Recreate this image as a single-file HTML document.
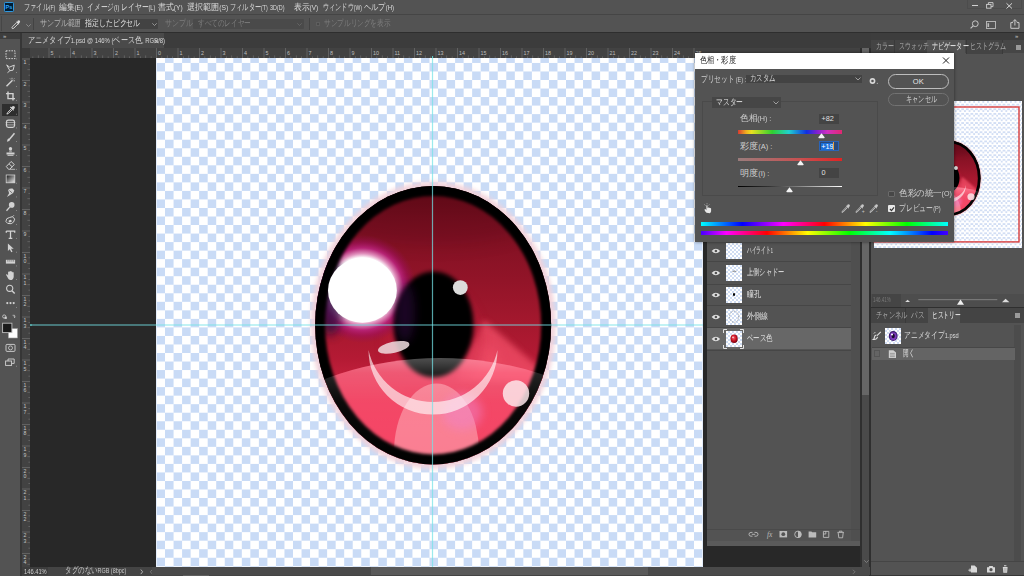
<!DOCTYPE html>
<html><head><meta charset="utf-8">
<style>
*{margin:0;padding:0;box-sizing:border-box}
html,body{width:1024px;height:576px;overflow:hidden;background:#535353;font-family:"Liberation Sans",sans-serif;color:#d4d4d4}
.a{position:absolute}
.t{position:absolute;white-space:nowrap}
svg{position:absolute;overflow:visible}
</style></head><body>
<div class="a" style="left:0px;top:0px;width:1024px;height:14px;background:#535353;"></div>
<div class="a" style="left:0px;top:14px;width:1024px;height:1px;background:#454545;"></div>
<div class="a" style="left:0px;top:15px;width:1024px;height:17px;background:#535353;"></div>
<div class="a" style="left:0px;top:32px;width:1024px;height:1px;background:#2e2e2e;"></div>
<div class="a" style="left:0px;top:33px;width:1024px;height:543px;background:#363636;"></div>
<div class="a" style="left:0px;top:33px;width:20px;height:6px;background:#3d3d3d;"></div>
<div class="a" style="left:0px;top:39px;width:20px;height:537px;background:#535353;"></div>
<div class="t" style="left:3px;top:32.5px;font-size:6px;color:#c8c8c8;letter-spacing:-1px">&#187;</div>
<div class="a" style="left:22px;top:33px;width:849px;height:15px;background:#3c3c3c;"></div>
<div class="a" style="left:22px;top:33px;width:142px;height:15px;background:#4a4a4a;"></div>
<div class="a" style="left:22px;top:48px;width:840px;height:10px;background:#424242;"></div>
<div class="a" style="left:22px;top:58px;width:8px;height:509px;background:#424242;"></div>
<div class="a" style="left:22px;top:48px;width:8px;height:10px;background:#3a3a3a;"></div>
<div class="a" style="left:30px;top:58px;width:673px;height:509px;background:#282828;"></div>
<div class="a" style="left:156px;top:58px;width:546.6px;height:508.5px;background:#ffffff;background-image:conic-gradient(#c9dbf6 25%,#ffffff 0 50%,#c9dbf6 0 75%,#ffffff 0);background-size:17.0667px 17.0667px;background-position:0.5px -3.6px"></div>
<div class="a" style="left:22px;top:567px;width:849px;height:9px;background:#444444;"></div>
<div class="a" style="left:22px;top:567px;width:26px;height:8px;background:#3d3d3d;"></div>
<div class="a" style="left:703px;top:58px;width:159px;height:509px;background:#282828;"></div>
<div class="a" style="left:707px;top:58px;width:153px;height:485px;background:#535353;"></div>
<div class="a" style="left:860px;top:48px;width:2px;height:519px;background:#2f2f2f;"></div>
<div class="a" style="left:862px;top:48px;width:7px;height:347px;background:#666666;"></div>
<div class="a" style="left:862px;top:395px;width:7px;height:172px;background:#4a4a4a;"></div>
<div class="a" style="left:869px;top:48px;width:2px;height:528px;background:#2f2f2f;"></div>
<div class="a" style="left:871px;top:33px;width:153px;height:7px;background:#3d3d3d;"></div>
<div class="t" style="left:1015px;top:32.5px;font-size:6px;color:#c8c8c8;letter-spacing:-1px">&#187;</div>
<div class="a" style="left:871px;top:40px;width:153px;height:13px;background:#464646;"></div>
<div class="a" style="left:871px;top:53px;width:153px;height:254px;background:#535353;"></div>
<div class="a" style="left:871px;top:307px;width:153px;height:1px;background:#2f2f2f;"></div>
<div class="a" style="left:871px;top:308px;width:153px;height:15px;background:#464646;"></div>
<div class="a" style="left:871px;top:323px;width:153px;height:252px;background:#535353;"></div>
<svg style="left:0;top:0" width="1024" height="576" viewBox="0 0 1024 576"><defs>
<filter id="fb1" x="-20%" y="-20%" width="140%" height="140%"><feGaussianBlur stdDeviation="1.6"/></filter>
<filter id="fb2" x="-30%" y="-30%" width="160%" height="160%"><feGaussianBlur stdDeviation="2"/></filter>
<filter id="fb3" x="-50%" y="-50%" width="200%" height="200%"><feGaussianBlur stdDeviation="3"/></filter>
<filter id="fb4" x="-50%" y="-50%" width="200%" height="200%"><feGaussianBlur stdDeviation="5"/></filter>
<filter id="fb8" x="-50%" y="-50%" width="200%" height="200%"><feGaussianBlur stdDeviation="9"/></filter>
<clipPath id="eyeclip"><ellipse cx="433.15" cy="325.2" rx="118" ry="139.2"/></clipPath>
<linearGradient id="irisg" gradientUnits="userSpaceOnUse" x1="0" y1="186" x2="0" y2="464">
  <stop offset="0" stop-color="#640b18"/>
  <stop offset="0.14" stop-color="#7e1022"/>
  <stop offset="0.34" stop-color="#921428"/>
  <stop offset="0.5" stop-color="#a5182e"/>
  <stop offset="0.62" stop-color="#b41a34"/>
  <stop offset="0.8" stop-color="#d82a48"/>
  <stop offset="1" stop-color="#e03050"/>
</linearGradient>
<radialGradient id="hlglow" gradientUnits="userSpaceOnUse" cx="362.4" cy="289" r="54">
  <stop offset="0" stop-color="#ffffff"/>
  <stop offset="0.58" stop-color="#ffffff"/>
  <stop offset="0.655" stop-color="#e090bc"/>
  <stop offset="0.76" stop-color="#b82478" stop-opacity="0.95"/>
  <stop offset="0.87" stop-color="#a01060" stop-opacity="0.55"/>
  <stop offset="1" stop-color="#901050" stop-opacity="0"/>
</radialGradient>
<linearGradient id="lensg" gradientUnits="userSpaceOnUse" x1="0" y1="357" x2="0" y2="470">
  <stop offset="0" stop-color="#ffffff" stop-opacity="0.32"/>
  <stop offset="0.14" stop-color="#ffffff" stop-opacity="0.14"/>
  <stop offset="0.4" stop-color="#ffffff" stop-opacity="0.04"/>
  <stop offset="1" stop-color="#ffffff" stop-opacity="0"/>
</linearGradient>
<g id="eye">
  <ellipse cx="433.15" cy="325.2" rx="122.5" ry="143.7" fill="#f2d2da" opacity="0.95" filter="url(#fb2)"/>
  <ellipse cx="433.15" cy="325.2" rx="118" ry="139.2" fill="#000"/>
  <g clip-path="url(#eyeclip)">
    <ellipse cx="433.15" cy="325.2" rx="118" ry="139.2" fill="url(#irisg)"/>
    <ellipse cx="433.15" cy="205" rx="120" ry="40" fill="#3a0610" opacity="0.18" filter="url(#fb8)"/>
    <path d="M484 320 L558 384 L456 380 Z" fill="#f25068" opacity="0.78" filter="url(#fb3)"/>
    <ellipse cx="478" cy="360" rx="22" ry="16" fill="#f25068" opacity="0.5" filter="url(#fb4)"/>
    <ellipse cx="433" cy="340" rx="50" ry="58" fill="#c01c3c" opacity="0.35" filter="url(#fb4)"/>
    <ellipse cx="362.4" cy="289" rx="54" ry="54" fill="url(#hlglow)"/>
    <ellipse cx="330" cy="296" rx="14" ry="40" fill="#2a0840" opacity="0.75" filter="url(#fb4)"/>
    <ellipse cx="440" cy="560" rx="260" ry="202" fill="#ff4c6c" opacity="0.7"/>
    <ellipse cx="433.6" cy="324.5" rx="40" ry="53" fill="#000" filter="url(#fb2)"/>
    <ellipse cx="405" cy="312" rx="10" ry="30" fill="#3a1050" opacity="0.45" filter="url(#fb4)"/>
    <ellipse cx="436.5" cy="452" rx="42.5" ry="68.5" fill="#ffb8c0" opacity="0.5"/>
    <ellipse cx="462" cy="412" rx="20" ry="18" fill="#f080c8" opacity="0.5" filter="url(#fb4)"/>
    <path d="M368.5 350.1 A64.5 64.5 0 0 0 497.5 350.1 A66 66 0 0 1 368.5 350.1 Z" fill="#ffffff" opacity="0.62"/>
    <ellipse cx="393.7" cy="347.3" rx="16" ry="5.6" transform="rotate(-12 393.7 347.3)" fill="#f0dde0" opacity="0.85"/>
    <circle cx="460.3" cy="287.6" r="7.4" fill="#dcdcdc"/>
    <ellipse cx="433.15" cy="325.2" rx="118" ry="139.2" fill="none" stroke="#000" stroke-width="20" filter="url(#fb1)"/>
    <ellipse cx="440" cy="560" rx="260" ry="202" fill="url(#lensg)"/>
    <circle cx="516" cy="393.5" r="13.2" fill="#fde6ea" opacity="0.85"/>
    <ellipse cx="362.4" cy="290.4" rx="34.4" ry="32.4" fill="#ffffff" filter="url(#fbw)"/>
  </g>
</g>
<filter id="fbw" x="-20%" y="-20%" width="140%" height="140%"><feGaussianBlur stdDeviation="0.6"/></filter>
</defs><use href="#eye"/><rect x="30" y="324.4" width="673" height="1.2" fill="#74e2e6" opacity="0.72"/><rect x="431.9" y="58" width="1.2" height="509" fill="#74e2e6" opacity="0.72"/></svg>
<svg style="left:4px;top:1.8px" width="10" height="10"><rect x="0.5" y="0.5" width="9" height="9" rx="0.8" fill="#001d34" stroke="#2fa3f0" stroke-width="0.9"/><text x="1.6" y="7.2" font-size="5.6" font-weight="bold" fill="#31a8ff" font-family="Liberation Sans">Ps</text></svg>
<div class="t" style="left:24.40px;top:3.50px;font-size:7.5px;line-height:7.5px;color:#dcdcdc;font-weight:400;transform:scaleX(0.687);transform-origin:0 0;"><span style="font-size:1.22em">ファイル</span>(F)</div>
<div class="t" style="left:58.60px;top:3.50px;font-size:7.5px;line-height:7.5px;color:#dcdcdc;font-weight:400;transform:scaleX(0.856);transform-origin:0 0;"><span style="font-size:1.22em">編集</span>(E)</div>
<div class="t" style="left:87.00px;top:3.50px;font-size:7.5px;line-height:7.5px;color:#dcdcdc;font-weight:400;transform:scaleX(0.750);transform-origin:0 0;"><span style="font-size:1.22em">イメージ</span>(I)</div>
<div class="t" style="left:121.00px;top:3.50px;font-size:7.5px;line-height:7.5px;color:#dcdcdc;font-weight:400;transform:scaleX(0.763);transform-origin:0 0;"><span style="font-size:1.22em">レイヤー</span>(L)</div>
<div class="t" style="left:157.80px;top:3.50px;font-size:7.5px;line-height:7.5px;color:#dcdcdc;font-weight:400;transform:scaleX(0.880);transform-origin:0 0;"><span style="font-size:1.22em">書式</span>(Y)</div>
<div class="t" style="left:187.00px;top:3.50px;font-size:7.5px;line-height:7.5px;color:#dcdcdc;font-weight:400;transform:scaleX(0.897);transform-origin:0 0;"><span style="font-size:1.22em">選択範囲</span>(S)</div>
<div class="t" style="left:230.00px;top:3.50px;font-size:7.5px;line-height:7.5px;color:#dcdcdc;font-weight:400;transform:scaleX(0.691);transform-origin:0 0;"><span style="font-size:1.22em">フィルター</span>(T)</div>
<div class="t" style="left:269.60px;top:3.50px;font-size:7.5px;line-height:7.5px;color:#dcdcdc;font-weight:400;transform:scaleX(0.723);transform-origin:0 0;">3D(D)</div>
<div class="t" style="left:293.50px;top:3.50px;font-size:7.5px;line-height:7.5px;color:#dcdcdc;font-weight:400;transform:scaleX(0.860);transform-origin:0 0;"><span style="font-size:1.22em">表示</span>(V)</div>
<div class="t" style="left:322.80px;top:3.50px;font-size:7.5px;line-height:7.5px;color:#dcdcdc;font-weight:400;transform:scaleX(0.684);transform-origin:0 0;"><span style="font-size:1.22em">ウィンドウ</span>(W)</div>
<div class="t" style="left:364.00px;top:3.50px;font-size:7.5px;line-height:7.5px;color:#dcdcdc;font-weight:400;transform:scaleX(0.803);transform-origin:0 0;"><span style="font-size:1.22em">ヘルプ</span>(H)</div>
<div class="a" style="left:967px;top:0px;width:55px;height:9px;background:transparent;border:1px solid #4c4c4c;border-top:none"></div>
<div class="a" style="left:972px;top:5px;width:6px;height:1.3px;background:#d0d0d0;"></div>
<svg style="left:986px;top:1.5px" width="8" height="7"><rect x="0.6" y="2.4" width="4.4" height="3.8" fill="none" stroke="#d0d0d0" stroke-width="0.9"/><path d="M2.4 2.4V0.6H7V4.6H5" fill="none" stroke="#d0d0d0" stroke-width="0.9"/></svg>
<svg style="left:1006px;top:2.5px" width="7" height="6"><path d="M0.5 0.3L6 5.5M6 0.3L0.5 5.5" stroke="#d6d6d6" stroke-width="1"/></svg>
<div class="a" style="left:0.6px;top:16px;width:1px;height:15px;background:#464646;"></div>
<svg style="left:10.5px;top:20px" width="10" height="9"><path d="M6.6 0.8Q7.8 -0.2 8.8 0.8Q9.6 1.8 8.6 2.8L7.8 3.4L8.3 4L7.6 4.6L5 2L5.6 1.4L6.2 1.9Z" fill="#dcdcdc"/><path d="M5.6 2.6L1.4 6.8Q0.6 7.8 1.2 8.4Q1.8 9 2.8 8.2L7 4" fill="none" stroke="#dcdcdc" stroke-width="0.9"/></svg>
<svg style="left:25.5px;top:24px" width="5" height="3"><path d="M0.3 0.3L2.5 2.5L4.7 0.3" stroke="#9a9a9a" fill="none" stroke-width="0.8"/></svg>
<div class="a" style="left:33px;top:18px;width:0.8px;height:12px;background:#434343;"></div>
<div class="t" style="left:40.00px;top:20.40px;font-size:7.5px;line-height:7.5px;color:#b4b4b4;font-weight:400;transform:scaleX(0.783);transform-origin:0 0;"><span style="font-size:1.22em">サンプル範囲</span> :</div>
<div class="a" style="left:80.1px;top:18.9px;width:77.9px;height:10.6px;background:#434343;border-radius:1px"></div>
<div class="t" style="left:84.50px;top:20.40px;font-size:7.5px;line-height:7.5px;color:#e4e4e4;font-weight:400;transform:scaleX(0.768);transform-origin:0 0;"><span style="font-size:1.22em">指定したピクセル</span></div>
<svg style="left:152px;top:23px" width="5" height="3"><path d="M0.3 0.3L2.5 2.5L4.7 0.3" stroke="#aaa" fill="none" stroke-width="0.8"/></svg>
<div class="t" style="left:165.00px;top:20.40px;font-size:7.5px;line-height:7.5px;color:#7c7c7c;font-weight:400;transform:scaleX(0.766);transform-origin:0 0;"><span style="font-size:1.22em">サンプル</span> :</div>
<div class="a" style="left:192.8px;top:18.9px;width:111.2px;height:10.6px;background:#4a4a4a;border-radius:1px"></div>
<div class="t" style="left:197.50px;top:20.40px;font-size:7.5px;line-height:7.5px;color:#7c7c7c;font-weight:400;transform:scaleX(0.732);transform-origin:0 0;"><span style="font-size:1.22em">すべてのレイヤー</span></div>
<svg style="left:297px;top:23px" width="5" height="3"><path d="M0.3 0.3L2.5 2.5L4.7 0.3" stroke="#6a6a6a" fill="none" stroke-width="0.8"/></svg>
<div class="a" style="left:308.5px;top:18px;width:0.8px;height:12px;background:#434343;"></div>
<div class="a" style="left:315.8px;top:21.5px;width:4.2px;height:4.2px;background:#4a4a4a;border:0.8px solid #5e5e5e"></div>
<div class="t" style="left:324.00px;top:20.40px;font-size:7.5px;line-height:7.5px;color:#7c7c7c;font-weight:400;transform:scaleX(0.737);transform-origin:0 0;"><span style="font-size:1.22em">サンプルリングを表示</span></div>
<svg style="left:970px;top:19.5px" width="9" height="9"><circle cx="5.3" cy="3.7" r="2.9" fill="none" stroke="#c8c8c8" stroke-width="1"/><path d="M3.2 5.8L0.6 8.4" stroke="#c8c8c8" stroke-width="1.1"/></svg>
<svg style="left:985.5px;top:20.5px" width="10" height="8"><rect x="0.5" y="0.5" width="9" height="7" fill="none" stroke="#bcbcbc" stroke-width="0.9"/><rect x="1.5" y="2.2" width="1.6" height="3.8" fill="#bcbcbc"/></svg>
<svg style="left:1009.5px;top:19px" width="10" height="10"><path d="M3 3.6H0.8V9.3H9V3.6H6.8" fill="none" stroke="#c8c8c8" stroke-width="1"/><path d="M4.9 6.5V0.8M2.9 2.7L4.9 0.6L6.9 2.7" fill="none" stroke="#c8c8c8" stroke-width="1"/></svg>
<div class="t" style="left:27.70px;top:37.10px;font-size:7.5px;line-height:7.5px;color:#d8d8d8;font-weight:400;transform:scaleX(0.792);transform-origin:0 0;"><span style="font-size:1.22em">アニメタイプ</span>1.psd @ 146% (<span style="font-size:1.22em">ベース色</span>, RGB/8)</div>
<svg style="left:154px;top:38.8px" width="5" height="5"><path d="M0.5 0.5L4.2 4.2M4.2 0.5L0.5 4.2" stroke="#bcbcbc" stroke-width="0.9"/></svg>
<svg style="left:0;top:0" width="1024" height="576"><rect x="32.52" y="56.4" width="0.7" height="1.6" fill="#6e6e6e"/><rect x="37.90" y="55.4" width="0.7" height="2.6" fill="#6e6e6e"/><rect x="43.27" y="56.4" width="0.7" height="1.6" fill="#6e6e6e"/><rect x="48.60" y="48" width="0.8" height="10" fill="#6a6a6a"/><text x="50.40" y="54.8" font-size="5.4" fill="#bdbdbd" font-family="Liberation Sans">5</text><rect x="54.02" y="56.4" width="0.7" height="1.6" fill="#6e6e6e"/><rect x="59.40" y="55.4" width="0.7" height="2.6" fill="#6e6e6e"/><rect x="64.78" y="56.4" width="0.7" height="1.6" fill="#6e6e6e"/><rect x="70.10" y="48" width="0.8" height="10" fill="#6a6a6a"/><text x="71.90" y="54.8" font-size="5.4" fill="#bdbdbd" font-family="Liberation Sans">4</text><rect x="75.53" y="56.4" width="0.7" height="1.6" fill="#6e6e6e"/><rect x="80.90" y="55.4" width="0.7" height="2.6" fill="#6e6e6e"/><rect x="86.28" y="56.4" width="0.7" height="1.6" fill="#6e6e6e"/><rect x="91.60" y="48" width="0.8" height="10" fill="#6a6a6a"/><text x="93.40" y="54.8" font-size="5.4" fill="#bdbdbd" font-family="Liberation Sans">3</text><rect x="97.03" y="56.4" width="0.7" height="1.6" fill="#6e6e6e"/><rect x="102.40" y="55.4" width="0.7" height="2.6" fill="#6e6e6e"/><rect x="107.78" y="56.4" width="0.7" height="1.6" fill="#6e6e6e"/><rect x="113.10" y="48" width="0.8" height="10" fill="#6a6a6a"/><text x="114.90" y="54.8" font-size="5.4" fill="#bdbdbd" font-family="Liberation Sans">2</text><rect x="118.53" y="56.4" width="0.7" height="1.6" fill="#6e6e6e"/><rect x="123.90" y="55.4" width="0.7" height="2.6" fill="#6e6e6e"/><rect x="129.28" y="56.4" width="0.7" height="1.6" fill="#6e6e6e"/><rect x="134.60" y="48" width="0.8" height="10" fill="#6a6a6a"/><text x="136.40" y="54.8" font-size="5.4" fill="#bdbdbd" font-family="Liberation Sans">1</text><rect x="140.03" y="56.4" width="0.7" height="1.6" fill="#6e6e6e"/><rect x="145.40" y="55.4" width="0.7" height="2.6" fill="#6e6e6e"/><rect x="150.78" y="56.4" width="0.7" height="1.6" fill="#6e6e6e"/><rect x="156.10" y="48" width="0.8" height="10" fill="#6a6a6a"/><text x="157.90" y="54.8" font-size="5.4" fill="#bdbdbd" font-family="Liberation Sans">0</text><rect x="161.53" y="56.4" width="0.7" height="1.6" fill="#6e6e6e"/><rect x="166.90" y="55.4" width="0.7" height="2.6" fill="#6e6e6e"/><rect x="172.28" y="56.4" width="0.7" height="1.6" fill="#6e6e6e"/><rect x="177.60" y="48" width="0.8" height="10" fill="#6a6a6a"/><text x="179.40" y="54.8" font-size="5.4" fill="#bdbdbd" font-family="Liberation Sans">1</text><rect x="183.03" y="56.4" width="0.7" height="1.6" fill="#6e6e6e"/><rect x="188.40" y="55.4" width="0.7" height="2.6" fill="#6e6e6e"/><rect x="193.78" y="56.4" width="0.7" height="1.6" fill="#6e6e6e"/><rect x="199.10" y="48" width="0.8" height="10" fill="#6a6a6a"/><text x="200.90" y="54.8" font-size="5.4" fill="#bdbdbd" font-family="Liberation Sans">2</text><rect x="204.53" y="56.4" width="0.7" height="1.6" fill="#6e6e6e"/><rect x="209.90" y="55.4" width="0.7" height="2.6" fill="#6e6e6e"/><rect x="215.28" y="56.4" width="0.7" height="1.6" fill="#6e6e6e"/><rect x="220.60" y="48" width="0.8" height="10" fill="#6a6a6a"/><text x="222.40" y="54.8" font-size="5.4" fill="#bdbdbd" font-family="Liberation Sans">3</text><rect x="226.03" y="56.4" width="0.7" height="1.6" fill="#6e6e6e"/><rect x="231.40" y="55.4" width="0.7" height="2.6" fill="#6e6e6e"/><rect x="236.78" y="56.4" width="0.7" height="1.6" fill="#6e6e6e"/><rect x="242.10" y="48" width="0.8" height="10" fill="#6a6a6a"/><text x="243.90" y="54.8" font-size="5.4" fill="#bdbdbd" font-family="Liberation Sans">4</text><rect x="247.53" y="56.4" width="0.7" height="1.6" fill="#6e6e6e"/><rect x="252.90" y="55.4" width="0.7" height="2.6" fill="#6e6e6e"/><rect x="258.27" y="56.4" width="0.7" height="1.6" fill="#6e6e6e"/><rect x="263.60" y="48" width="0.8" height="10" fill="#6a6a6a"/><text x="265.40" y="54.8" font-size="5.4" fill="#bdbdbd" font-family="Liberation Sans">5</text><rect x="269.02" y="56.4" width="0.7" height="1.6" fill="#6e6e6e"/><rect x="274.40" y="55.4" width="0.7" height="2.6" fill="#6e6e6e"/><rect x="279.77" y="56.4" width="0.7" height="1.6" fill="#6e6e6e"/><rect x="285.10" y="48" width="0.8" height="10" fill="#6a6a6a"/><text x="286.90" y="54.8" font-size="5.4" fill="#bdbdbd" font-family="Liberation Sans">6</text><rect x="290.52" y="56.4" width="0.7" height="1.6" fill="#6e6e6e"/><rect x="295.90" y="55.4" width="0.7" height="2.6" fill="#6e6e6e"/><rect x="301.27" y="56.4" width="0.7" height="1.6" fill="#6e6e6e"/><rect x="306.60" y="48" width="0.8" height="10" fill="#6a6a6a"/><text x="308.40" y="54.8" font-size="5.4" fill="#bdbdbd" font-family="Liberation Sans">7</text><rect x="312.02" y="56.4" width="0.7" height="1.6" fill="#6e6e6e"/><rect x="317.40" y="55.4" width="0.7" height="2.6" fill="#6e6e6e"/><rect x="322.77" y="56.4" width="0.7" height="1.6" fill="#6e6e6e"/><rect x="328.10" y="48" width="0.8" height="10" fill="#6a6a6a"/><text x="329.90" y="54.8" font-size="5.4" fill="#bdbdbd" font-family="Liberation Sans">8</text><rect x="333.52" y="56.4" width="0.7" height="1.6" fill="#6e6e6e"/><rect x="338.90" y="55.4" width="0.7" height="2.6" fill="#6e6e6e"/><rect x="344.27" y="56.4" width="0.7" height="1.6" fill="#6e6e6e"/><rect x="349.60" y="48" width="0.8" height="10" fill="#6a6a6a"/><text x="351.40" y="54.8" font-size="5.4" fill="#bdbdbd" font-family="Liberation Sans">9</text><rect x="355.02" y="56.4" width="0.7" height="1.6" fill="#6e6e6e"/><rect x="360.40" y="55.4" width="0.7" height="2.6" fill="#6e6e6e"/><rect x="365.77" y="56.4" width="0.7" height="1.6" fill="#6e6e6e"/><rect x="371.10" y="48" width="0.8" height="10" fill="#6a6a6a"/><text x="372.90" y="54.8" font-size="5.4" fill="#bdbdbd" font-family="Liberation Sans">10</text><rect x="376.52" y="56.4" width="0.7" height="1.6" fill="#6e6e6e"/><rect x="381.90" y="55.4" width="0.7" height="2.6" fill="#6e6e6e"/><rect x="387.27" y="56.4" width="0.7" height="1.6" fill="#6e6e6e"/><rect x="392.60" y="48" width="0.8" height="10" fill="#6a6a6a"/><text x="394.40" y="54.8" font-size="5.4" fill="#bdbdbd" font-family="Liberation Sans">11</text><rect x="398.02" y="56.4" width="0.7" height="1.6" fill="#6e6e6e"/><rect x="403.40" y="55.4" width="0.7" height="2.6" fill="#6e6e6e"/><rect x="408.77" y="56.4" width="0.7" height="1.6" fill="#6e6e6e"/><rect x="414.10" y="48" width="0.8" height="10" fill="#6a6a6a"/><text x="415.90" y="54.8" font-size="5.4" fill="#bdbdbd" font-family="Liberation Sans">12</text><rect x="419.52" y="56.4" width="0.7" height="1.6" fill="#6e6e6e"/><rect x="424.90" y="55.4" width="0.7" height="2.6" fill="#6e6e6e"/><rect x="430.27" y="56.4" width="0.7" height="1.6" fill="#6e6e6e"/><rect x="435.60" y="48" width="0.8" height="10" fill="#6a6a6a"/><text x="437.40" y="54.8" font-size="5.4" fill="#bdbdbd" font-family="Liberation Sans">13</text><rect x="441.02" y="56.4" width="0.7" height="1.6" fill="#6e6e6e"/><rect x="446.40" y="55.4" width="0.7" height="2.6" fill="#6e6e6e"/><rect x="451.77" y="56.4" width="0.7" height="1.6" fill="#6e6e6e"/><rect x="457.10" y="48" width="0.8" height="10" fill="#6a6a6a"/><text x="458.90" y="54.8" font-size="5.4" fill="#bdbdbd" font-family="Liberation Sans">14</text><rect x="462.52" y="56.4" width="0.7" height="1.6" fill="#6e6e6e"/><rect x="467.90" y="55.4" width="0.7" height="2.6" fill="#6e6e6e"/><rect x="473.27" y="56.4" width="0.7" height="1.6" fill="#6e6e6e"/><rect x="478.60" y="48" width="0.8" height="10" fill="#6a6a6a"/><text x="480.40" y="54.8" font-size="5.4" fill="#bdbdbd" font-family="Liberation Sans">15</text><rect x="484.02" y="56.4" width="0.7" height="1.6" fill="#6e6e6e"/><rect x="489.40" y="55.4" width="0.7" height="2.6" fill="#6e6e6e"/><rect x="494.77" y="56.4" width="0.7" height="1.6" fill="#6e6e6e"/><rect x="500.10" y="48" width="0.8" height="10" fill="#6a6a6a"/><text x="501.90" y="54.8" font-size="5.4" fill="#bdbdbd" font-family="Liberation Sans">16</text><rect x="505.52" y="56.4" width="0.7" height="1.6" fill="#6e6e6e"/><rect x="510.90" y="55.4" width="0.7" height="2.6" fill="#6e6e6e"/><rect x="516.27" y="56.4" width="0.7" height="1.6" fill="#6e6e6e"/><rect x="521.60" y="48" width="0.8" height="10" fill="#6a6a6a"/><text x="523.40" y="54.8" font-size="5.4" fill="#bdbdbd" font-family="Liberation Sans">17</text><rect x="527.02" y="56.4" width="0.7" height="1.6" fill="#6e6e6e"/><rect x="532.40" y="55.4" width="0.7" height="2.6" fill="#6e6e6e"/><rect x="537.77" y="56.4" width="0.7" height="1.6" fill="#6e6e6e"/><rect x="543.10" y="48" width="0.8" height="10" fill="#6a6a6a"/><text x="544.90" y="54.8" font-size="5.4" fill="#bdbdbd" font-family="Liberation Sans">18</text><rect x="548.52" y="56.4" width="0.7" height="1.6" fill="#6e6e6e"/><rect x="553.90" y="55.4" width="0.7" height="2.6" fill="#6e6e6e"/><rect x="559.27" y="56.4" width="0.7" height="1.6" fill="#6e6e6e"/><rect x="564.60" y="48" width="0.8" height="10" fill="#6a6a6a"/><text x="566.40" y="54.8" font-size="5.4" fill="#bdbdbd" font-family="Liberation Sans">19</text><rect x="570.02" y="56.4" width="0.7" height="1.6" fill="#6e6e6e"/><rect x="575.40" y="55.4" width="0.7" height="2.6" fill="#6e6e6e"/><rect x="580.77" y="56.4" width="0.7" height="1.6" fill="#6e6e6e"/><rect x="586.10" y="48" width="0.8" height="10" fill="#6a6a6a"/><text x="587.90" y="54.8" font-size="5.4" fill="#bdbdbd" font-family="Liberation Sans">20</text><rect x="591.52" y="56.4" width="0.7" height="1.6" fill="#6e6e6e"/><rect x="596.90" y="55.4" width="0.7" height="2.6" fill="#6e6e6e"/><rect x="602.27" y="56.4" width="0.7" height="1.6" fill="#6e6e6e"/><rect x="607.60" y="48" width="0.8" height="10" fill="#6a6a6a"/><text x="609.40" y="54.8" font-size="5.4" fill="#bdbdbd" font-family="Liberation Sans">21</text><rect x="613.02" y="56.4" width="0.7" height="1.6" fill="#6e6e6e"/><rect x="618.40" y="55.4" width="0.7" height="2.6" fill="#6e6e6e"/><rect x="623.77" y="56.4" width="0.7" height="1.6" fill="#6e6e6e"/><rect x="629.10" y="48" width="0.8" height="10" fill="#6a6a6a"/><text x="630.90" y="54.8" font-size="5.4" fill="#bdbdbd" font-family="Liberation Sans">22</text><rect x="634.52" y="56.4" width="0.7" height="1.6" fill="#6e6e6e"/><rect x="639.90" y="55.4" width="0.7" height="2.6" fill="#6e6e6e"/><rect x="645.27" y="56.4" width="0.7" height="1.6" fill="#6e6e6e"/><rect x="650.60" y="48" width="0.8" height="10" fill="#6a6a6a"/><text x="652.40" y="54.8" font-size="5.4" fill="#bdbdbd" font-family="Liberation Sans">23</text><rect x="656.02" y="56.4" width="0.7" height="1.6" fill="#6e6e6e"/><rect x="661.40" y="55.4" width="0.7" height="2.6" fill="#6e6e6e"/><rect x="666.77" y="56.4" width="0.7" height="1.6" fill="#6e6e6e"/><rect x="672.10" y="48" width="0.8" height="10" fill="#6a6a6a"/><text x="673.90" y="54.8" font-size="5.4" fill="#bdbdbd" font-family="Liberation Sans">24</text><rect x="677.52" y="56.4" width="0.7" height="1.6" fill="#6e6e6e"/><rect x="682.90" y="55.4" width="0.7" height="2.6" fill="#6e6e6e"/><rect x="688.27" y="56.4" width="0.7" height="1.6" fill="#6e6e6e"/><rect x="693.60" y="48" width="0.8" height="10" fill="#6a6a6a"/><text x="695.40" y="54.8" font-size="5.4" fill="#bdbdbd" font-family="Liberation Sans">25</text><rect x="699.02" y="56.4" width="0.7" height="1.6" fill="#6e6e6e"/><rect x="704.40" y="55.4" width="0.7" height="2.6" fill="#6e6e6e"/><rect x="709.77" y="56.4" width="0.7" height="1.6" fill="#6e6e6e"/><rect x="22" y="58.60" width="8" height="0.8" fill="#6a6a6a"/><text x="23.4" y="64.40" font-size="5.2" fill="#c4c4c4" font-family="Liberation Sans">1</text><rect x="28.4" y="64.03" width="1.6" height="0.7" fill="#6e6e6e"/><rect x="27.4" y="69.40" width="2.6" height="0.7" fill="#6e6e6e"/><rect x="28.4" y="74.78" width="1.6" height="0.7" fill="#6e6e6e"/><rect x="22" y="80.10" width="8" height="0.8" fill="#6a6a6a"/><text x="23.4" y="85.90" font-size="5.2" fill="#c4c4c4" font-family="Liberation Sans">2</text><rect x="28.4" y="85.53" width="1.6" height="0.7" fill="#6e6e6e"/><rect x="27.4" y="90.90" width="2.6" height="0.7" fill="#6e6e6e"/><rect x="28.4" y="96.28" width="1.6" height="0.7" fill="#6e6e6e"/><rect x="22" y="101.60" width="8" height="0.8" fill="#6a6a6a"/><text x="23.4" y="107.40" font-size="5.2" fill="#c4c4c4" font-family="Liberation Sans">3</text><rect x="28.4" y="107.03" width="1.6" height="0.7" fill="#6e6e6e"/><rect x="27.4" y="112.40" width="2.6" height="0.7" fill="#6e6e6e"/><rect x="28.4" y="117.78" width="1.6" height="0.7" fill="#6e6e6e"/><rect x="22" y="123.10" width="8" height="0.8" fill="#6a6a6a"/><text x="23.4" y="128.90" font-size="5.2" fill="#c4c4c4" font-family="Liberation Sans">4</text><rect x="28.4" y="128.53" width="1.6" height="0.7" fill="#6e6e6e"/><rect x="27.4" y="133.90" width="2.6" height="0.7" fill="#6e6e6e"/><rect x="28.4" y="139.28" width="1.6" height="0.7" fill="#6e6e6e"/><rect x="22" y="144.60" width="8" height="0.8" fill="#6a6a6a"/><text x="23.4" y="150.40" font-size="5.2" fill="#c4c4c4" font-family="Liberation Sans">5</text><rect x="28.4" y="150.03" width="1.6" height="0.7" fill="#6e6e6e"/><rect x="27.4" y="155.40" width="2.6" height="0.7" fill="#6e6e6e"/><rect x="28.4" y="160.78" width="1.6" height="0.7" fill="#6e6e6e"/><rect x="22" y="166.10" width="8" height="0.8" fill="#6a6a6a"/><text x="23.4" y="171.90" font-size="5.2" fill="#c4c4c4" font-family="Liberation Sans">6</text><rect x="28.4" y="171.53" width="1.6" height="0.7" fill="#6e6e6e"/><rect x="27.4" y="176.90" width="2.6" height="0.7" fill="#6e6e6e"/><rect x="28.4" y="182.28" width="1.6" height="0.7" fill="#6e6e6e"/><rect x="22" y="187.60" width="8" height="0.8" fill="#6a6a6a"/><text x="23.4" y="193.40" font-size="5.2" fill="#c4c4c4" font-family="Liberation Sans">7</text><rect x="28.4" y="193.03" width="1.6" height="0.7" fill="#6e6e6e"/><rect x="27.4" y="198.40" width="2.6" height="0.7" fill="#6e6e6e"/><rect x="28.4" y="203.78" width="1.6" height="0.7" fill="#6e6e6e"/><rect x="22" y="209.10" width="8" height="0.8" fill="#6a6a6a"/><text x="23.4" y="214.90" font-size="5.2" fill="#c4c4c4" font-family="Liberation Sans">8</text><rect x="28.4" y="214.53" width="1.6" height="0.7" fill="#6e6e6e"/><rect x="27.4" y="219.90" width="2.6" height="0.7" fill="#6e6e6e"/><rect x="28.4" y="225.28" width="1.6" height="0.7" fill="#6e6e6e"/><rect x="22" y="230.60" width="8" height="0.8" fill="#6a6a6a"/><text x="23.4" y="236.40" font-size="5.2" fill="#c4c4c4" font-family="Liberation Sans">9</text><rect x="28.4" y="236.03" width="1.6" height="0.7" fill="#6e6e6e"/><rect x="27.4" y="241.40" width="2.6" height="0.7" fill="#6e6e6e"/><rect x="28.4" y="246.78" width="1.6" height="0.7" fill="#6e6e6e"/><rect x="22" y="252.10" width="8" height="0.8" fill="#6a6a6a"/><text x="23.4" y="257.90" font-size="5.2" fill="#c4c4c4" font-family="Liberation Sans">1</text><text x="23.4" y="263.30" font-size="5.2" fill="#c4c4c4" font-family="Liberation Sans">0</text><rect x="28.4" y="257.52" width="1.6" height="0.7" fill="#6e6e6e"/><rect x="27.4" y="262.90" width="2.6" height="0.7" fill="#6e6e6e"/><rect x="28.4" y="268.27" width="1.6" height="0.7" fill="#6e6e6e"/><rect x="22" y="273.60" width="8" height="0.8" fill="#6a6a6a"/><text x="23.4" y="279.40" font-size="5.2" fill="#c4c4c4" font-family="Liberation Sans">1</text><text x="23.4" y="284.80" font-size="5.2" fill="#c4c4c4" font-family="Liberation Sans">1</text><rect x="28.4" y="279.02" width="1.6" height="0.7" fill="#6e6e6e"/><rect x="27.4" y="284.40" width="2.6" height="0.7" fill="#6e6e6e"/><rect x="28.4" y="289.77" width="1.6" height="0.7" fill="#6e6e6e"/><rect x="22" y="295.10" width="8" height="0.8" fill="#6a6a6a"/><text x="23.4" y="300.90" font-size="5.2" fill="#c4c4c4" font-family="Liberation Sans">1</text><text x="23.4" y="306.30" font-size="5.2" fill="#c4c4c4" font-family="Liberation Sans">2</text><rect x="28.4" y="300.52" width="1.6" height="0.7" fill="#6e6e6e"/><rect x="27.4" y="305.90" width="2.6" height="0.7" fill="#6e6e6e"/><rect x="28.4" y="311.27" width="1.6" height="0.7" fill="#6e6e6e"/><rect x="22" y="316.60" width="8" height="0.8" fill="#6a6a6a"/><text x="23.4" y="322.40" font-size="5.2" fill="#c4c4c4" font-family="Liberation Sans">1</text><text x="23.4" y="327.80" font-size="5.2" fill="#c4c4c4" font-family="Liberation Sans">3</text><rect x="28.4" y="322.02" width="1.6" height="0.7" fill="#6e6e6e"/><rect x="27.4" y="327.40" width="2.6" height="0.7" fill="#6e6e6e"/><rect x="28.4" y="332.77" width="1.6" height="0.7" fill="#6e6e6e"/><rect x="22" y="338.10" width="8" height="0.8" fill="#6a6a6a"/><text x="23.4" y="343.90" font-size="5.2" fill="#c4c4c4" font-family="Liberation Sans">1</text><text x="23.4" y="349.30" font-size="5.2" fill="#c4c4c4" font-family="Liberation Sans">4</text><rect x="28.4" y="343.52" width="1.6" height="0.7" fill="#6e6e6e"/><rect x="27.4" y="348.90" width="2.6" height="0.7" fill="#6e6e6e"/><rect x="28.4" y="354.27" width="1.6" height="0.7" fill="#6e6e6e"/><rect x="22" y="359.60" width="8" height="0.8" fill="#6a6a6a"/><text x="23.4" y="365.40" font-size="5.2" fill="#c4c4c4" font-family="Liberation Sans">1</text><text x="23.4" y="370.80" font-size="5.2" fill="#c4c4c4" font-family="Liberation Sans">5</text><rect x="28.4" y="365.02" width="1.6" height="0.7" fill="#6e6e6e"/><rect x="27.4" y="370.40" width="2.6" height="0.7" fill="#6e6e6e"/><rect x="28.4" y="375.77" width="1.6" height="0.7" fill="#6e6e6e"/><rect x="22" y="381.10" width="8" height="0.8" fill="#6a6a6a"/><text x="23.4" y="386.90" font-size="5.2" fill="#c4c4c4" font-family="Liberation Sans">1</text><text x="23.4" y="392.30" font-size="5.2" fill="#c4c4c4" font-family="Liberation Sans">6</text><rect x="28.4" y="386.52" width="1.6" height="0.7" fill="#6e6e6e"/><rect x="27.4" y="391.90" width="2.6" height="0.7" fill="#6e6e6e"/><rect x="28.4" y="397.27" width="1.6" height="0.7" fill="#6e6e6e"/><rect x="22" y="402.60" width="8" height="0.8" fill="#6a6a6a"/><text x="23.4" y="408.40" font-size="5.2" fill="#c4c4c4" font-family="Liberation Sans">1</text><text x="23.4" y="413.80" font-size="5.2" fill="#c4c4c4" font-family="Liberation Sans">7</text><rect x="28.4" y="408.02" width="1.6" height="0.7" fill="#6e6e6e"/><rect x="27.4" y="413.40" width="2.6" height="0.7" fill="#6e6e6e"/><rect x="28.4" y="418.77" width="1.6" height="0.7" fill="#6e6e6e"/><rect x="22" y="424.10" width="8" height="0.8" fill="#6a6a6a"/><text x="23.4" y="429.90" font-size="5.2" fill="#c4c4c4" font-family="Liberation Sans">1</text><text x="23.4" y="435.30" font-size="5.2" fill="#c4c4c4" font-family="Liberation Sans">8</text><rect x="28.4" y="429.52" width="1.6" height="0.7" fill="#6e6e6e"/><rect x="27.4" y="434.90" width="2.6" height="0.7" fill="#6e6e6e"/><rect x="28.4" y="440.27" width="1.6" height="0.7" fill="#6e6e6e"/><rect x="22" y="445.60" width="8" height="0.8" fill="#6a6a6a"/><text x="23.4" y="451.40" font-size="5.2" fill="#c4c4c4" font-family="Liberation Sans">1</text><text x="23.4" y="456.80" font-size="5.2" fill="#c4c4c4" font-family="Liberation Sans">9</text><rect x="28.4" y="451.02" width="1.6" height="0.7" fill="#6e6e6e"/><rect x="27.4" y="456.40" width="2.6" height="0.7" fill="#6e6e6e"/><rect x="28.4" y="461.77" width="1.6" height="0.7" fill="#6e6e6e"/><rect x="22" y="467.10" width="8" height="0.8" fill="#6a6a6a"/><text x="23.4" y="472.90" font-size="5.2" fill="#c4c4c4" font-family="Liberation Sans">2</text><text x="23.4" y="478.30" font-size="5.2" fill="#c4c4c4" font-family="Liberation Sans">0</text><rect x="28.4" y="472.52" width="1.6" height="0.7" fill="#6e6e6e"/><rect x="27.4" y="477.90" width="2.6" height="0.7" fill="#6e6e6e"/><rect x="28.4" y="483.27" width="1.6" height="0.7" fill="#6e6e6e"/><rect x="22" y="488.60" width="8" height="0.8" fill="#6a6a6a"/><text x="23.4" y="494.40" font-size="5.2" fill="#c4c4c4" font-family="Liberation Sans">2</text><text x="23.4" y="499.80" font-size="5.2" fill="#c4c4c4" font-family="Liberation Sans">1</text><rect x="28.4" y="494.02" width="1.6" height="0.7" fill="#6e6e6e"/><rect x="27.4" y="499.40" width="2.6" height="0.7" fill="#6e6e6e"/><rect x="28.4" y="504.77" width="1.6" height="0.7" fill="#6e6e6e"/><rect x="22" y="510.10" width="8" height="0.8" fill="#6a6a6a"/><text x="23.4" y="515.90" font-size="5.2" fill="#c4c4c4" font-family="Liberation Sans">2</text><text x="23.4" y="521.30" font-size="5.2" fill="#c4c4c4" font-family="Liberation Sans">2</text><rect x="28.4" y="515.52" width="1.6" height="0.7" fill="#6e6e6e"/><rect x="27.4" y="520.90" width="2.6" height="0.7" fill="#6e6e6e"/><rect x="28.4" y="526.27" width="1.6" height="0.7" fill="#6e6e6e"/><rect x="22" y="531.60" width="8" height="0.8" fill="#6a6a6a"/><text x="23.4" y="537.40" font-size="5.2" fill="#c4c4c4" font-family="Liberation Sans">2</text><text x="23.4" y="542.80" font-size="5.2" fill="#c4c4c4" font-family="Liberation Sans">3</text><rect x="28.4" y="537.02" width="1.6" height="0.7" fill="#6e6e6e"/><rect x="27.4" y="542.40" width="2.6" height="0.7" fill="#6e6e6e"/><rect x="28.4" y="547.77" width="1.6" height="0.7" fill="#6e6e6e"/><rect x="22" y="553.10" width="8" height="0.8" fill="#6a6a6a"/><text x="23.4" y="558.90" font-size="5.2" fill="#c4c4c4" font-family="Liberation Sans">2</text><text x="23.4" y="564.30" font-size="5.2" fill="#c4c4c4" font-family="Liberation Sans">4</text><rect x="28.4" y="558.52" width="1.6" height="0.7" fill="#6e6e6e"/><rect x="27.4" y="563.90" width="2.6" height="0.7" fill="#6e6e6e"/><rect x="30" y="324.5" width="2" height="1.1" fill="#5ec4c0"/><rect x="432" y="56" width="1.1" height="2" fill="#5ec4c0"/></svg>
<div class="t" style="left:23.50px;top:567.56px;font-size:7px;line-height:7px;color:#d0d0d0;font-weight:400;transform:scaleX(0.821);transform-origin:0 0;">146.41%</div>
<div class="t" style="left:65.00px;top:567.30px;font-size:7.5px;line-height:7.5px;color:#c8c8c8;font-weight:400;transform:scaleX(0.724);transform-origin:0 0;"><span style="font-size:1.22em">タグのない</span>RGB (8bpc)</div>
<svg style="left:140px;top:568.5px" width="14" height="6"><path d="M0.8 0.5L2.6 2.8L0.8 5.1" stroke="#bbb" fill="none" stroke-width="0.9"/><path d="M12 0.8L10.4 2.8L12 4.8" stroke="#888" fill="none" stroke-width="0.7"/></svg>
<div class="a" style="left:152px;top:567px;width:718px;height:8px;background:#4a4a4a;"></div>
<div class="a" style="left:370.6px;top:567px;width:277.4px;height:8px;background:#5a5a5a;"></div>
<div class="a" style="left:183px;top:575px;width:26px;height:1px;background:#5e5e5e;"></div>
<svg style="left:852px;top:568.5px" width="5" height="6"><path d="M1 0.8L3 2.8L1 4.8" stroke="#888" fill="none" stroke-width="0.7"/></svg>
<div class="a" style="left:2px;top:104.3px;width:16px;height:11.7px;background:#2e2e2e;"></div>
<svg style="left:0;top:0" width="22" height="576"><g transform="translate(10.5 54.7)"><rect x="-4.5" y="-3.9" width="9" height="7.8" fill="none" stroke="#d2d2d2" stroke-width="1" stroke-dasharray="1.6 1.1"/></g><path d="M15.8 59.300000000000004L16.8 58.300000000000004V59.300000000000004Z" fill="#bdbdbd"/><g transform="translate(10.5 68.5)"><path d="M-3.8 -3.6L-1 -1.4L3.8 -3.4L2.6 1.6L-0.6 2.2L-3 4.2M-0.6 2.2L-3.8 -3.6" fill="none" stroke="#d2d2d2" stroke-width="1"/></g><path d="M15.8 73.1L16.8 72.1V73.1Z" fill="#bdbdbd"/><g transform="translate(10.5 82.30000000000001)"><path d="M-4 4L2 -2" stroke="#d2d2d2" stroke-width="1.5"/><path d="M1.5 -4.5V-3M3.8 -3.8L3 -3M4.5 -1.5H3M-0.5 -3.8L0.2 -3" stroke="#d2d2d2" stroke-width="0.8"/></g><path d="M15.8 86.9L16.8 85.9V86.9Z" fill="#bdbdbd"/><g transform="translate(10.5 96.10000000000001)"><path d="M-2.5 -4.5V2.5H4.5M-4.5 -2.5H2.5V4.5" fill="none" stroke="#d2d2d2" stroke-width="1.4"/></g><path d="M15.8 100.7L16.8 99.7V100.7Z" fill="#bdbdbd"/><g transform="translate(10.5 109.9)"><path d="M1.6 -3.4Q2.8 -4.6 4 -3.4Q5 -2.3 3.8 -1.2L3 -0.5L3.5 0.1L2.8 0.8L-0.6 -2.6L0.1 -3.3L0.7 -2.7Z" fill="#d2d2d2"/><path d="M1 -1.4L-3 2.8L-3.6 4.2L-2.2 3.6L2 -0.4" fill="none" stroke="#d2d2d2" stroke-width="1"/></g><path d="M15.8 114.5L16.8 113.5V114.5Z" fill="#bdbdbd"/><g transform="translate(10.5 123.7)"><rect x="-4" y="-3.6" width="8" height="7.2" rx="1.8" fill="none" stroke="#d2d2d2" stroke-width="1.2"/><path d="M-4.8 -1.2H4.8M-4.8 1.2H4.8" stroke="#d2d2d2" stroke-width="0.6"/></g><path d="M15.8 128.3L16.8 127.3V128.3Z" fill="#bdbdbd"/><g transform="translate(10.5 137.5)"><path d="M4 -4.2L-0.6 1.2" stroke="#d2d2d2" stroke-width="1.5"/><path d="M-1.2 0.6Q-3.4 1.2 -3.6 4.2Q-0.6 4 0 1.4Z" fill="#d2d2d2"/></g><path d="M15.8 142.1L16.8 141.1V142.1Z" fill="#bdbdbd"/><g transform="translate(10.5 151.3)"><circle cx="0" cy="-2.6" r="1.7" fill="#d2d2d2"/><path d="M-0.6 -1V1M0.6 -1V1" stroke="#d2d2d2" stroke-width="0.8"/><rect x="-4" y="1.2" width="8" height="2" fill="#d2d2d2"/><rect x="-3" y="3.6" width="6" height="0.9" fill="#d2d2d2"/></g><path d="M15.8 155.9L16.8 154.9V155.9Z" fill="#bdbdbd"/><g transform="translate(10.5 165.10000000000002)"><path d="M-4.2 1.4L0.6 -3.6L3.8 -0.6L-0.8 4.2H-2Z" fill="none" stroke="#d2d2d2" stroke-width="1"/><path d="M-1.4 -1.2L1.8 1.8" stroke="#d2d2d2" stroke-width="1"/><path d="M-0.8 4.2H4.6" stroke="#d2d2d2" stroke-width="0.8"/></g><path d="M15.8 169.70000000000002L16.8 168.70000000000002V169.70000000000002Z" fill="#bdbdbd"/><defs><linearGradient id="tgr" x1="0" y1="0" x2="1" y2="1"><stop offset="0" stop-color="#111"/><stop offset="1" stop-color="#eee"/></linearGradient></defs><g transform="translate(10.5 178.9)"><rect x="-4.3" y="-3.9" width="8.6" height="7.8" fill="url(#tgr)" stroke="#d2d2d2" stroke-width="0.8"/></g><path d="M15.8 183.5L16.8 182.5V183.5Z" fill="#bdbdbd"/><g transform="translate(10.5 192.7)"><path d="M-3.6 4.4L-1.4 0.6L-2.4 -2.8Q-1 -4.6 2 -4.2L3.8 -2.2Q3 1 0.8 1.6Z" fill="#d2d2d2"/><path d="M-1.2 -2.2L1.6 0.2" stroke="#535353" stroke-width="0.7"/></g><path d="M15.8 197.29999999999998L16.8 196.29999999999998V197.29999999999998Z" fill="#bdbdbd"/><g transform="translate(10.5 206.5)"><circle cx="1.2" cy="-1.6" r="2.8" fill="#d2d2d2"/><path d="M-0.8 0.6L-4 4.2" stroke="#d2d2d2" stroke-width="1.3"/></g><path d="M15.8 211.1L16.8 210.1V211.1Z" fill="#bdbdbd"/><g transform="translate(10.5 220.3)"><path d="M-4.6 1.2Q-4.6 -2.4 -1 -2.8L2 -3.6L4.2 -1.2Q3.6 2.6 0.6 3.4Q-3.6 4 -4.6 1.2Z" fill="none" stroke="#d2d2d2" stroke-width="1"/><path d="M-1.8 2.2Q-2.6 0.2 -0.4 -0.6Q1.8 -0.2 1 1.8Z" fill="#d2d2d2"/><path d="M2 -3.6L3.4 -5" stroke="#d2d2d2" stroke-width="0.9"/></g><path d="M15.8 224.9L16.8 223.9V224.9Z" fill="#bdbdbd"/><g transform="translate(10.5 234.10000000000002)"><path d="M-4.2 -3H4.2V-1.4M-4.2 -3V-1.4M0 -3V4.2M-1.8 4.2H1.8" fill="none" stroke="#d2d2d2" stroke-width="1.3"/></g><path d="M15.8 238.70000000000002L16.8 237.70000000000002V238.70000000000002Z" fill="#bdbdbd"/><g transform="translate(10.5 247.90000000000003)"><path d="M-2.6 -4.4V3.2L-0.8 1.4L0.8 4.4L2 3.8L0.6 0.8H3.2Z" fill="#d2d2d2"/></g><path d="M15.8 252.50000000000003L16.8 251.50000000000003V252.50000000000003Z" fill="#bdbdbd"/><g transform="translate(10.5 261.7)"><rect x="-4.6" y="-1.9" width="9.2" height="3.8" fill="#d2d2d2"/><path d="M-2.6 -1.9V0M-0.6 -1.9V0M1.4 -1.9V0M3.2 -1.9V0" stroke="#535353" stroke-width="0.6"/></g><path d="M15.8 266.3L16.8 265.3V266.3Z" fill="#bdbdbd"/><g transform="translate(10.5 275.5)"><path d="M-3.4 1L-4.4 -0.4Q-4.6 -1.6 -3.4 -1.2L-2.4 0V-3.4Q-1.8 -4.4 -1 -3.4V-1.2V-4.2Q-0.4 -5 0.4 -4.2V-1.2V-3.8Q1 -4.6 1.8 -3.8V-1V-3Q2.4 -3.8 3.2 -3V1.4Q2.8 4.4 0 4.6Q-2 4.6 -3.4 1Z" fill="#d2d2d2"/></g><path d="M15.8 280.1L16.8 279.1V280.1Z" fill="#bdbdbd"/><g transform="translate(10.5 289.3)"><circle cx="-0.8" cy="-1" r="3.1" fill="none" stroke="#d2d2d2" stroke-width="1.1"/><path d="M1.4 1.4L4.2 4.2" stroke="#d2d2d2" stroke-width="1.4"/></g><g transform="translate(10.5 303.1)"><circle cx="-3.2" cy="0" r="1.1" fill="#d2d2d2"/><circle cx="0" cy="0" r="1.1" fill="#d2d2d2"/><circle cx="3.2" cy="0" r="1.1" fill="#d2d2d2"/></g><path d="M15.8 307.70000000000005L16.8 306.70000000000005V307.70000000000005Z" fill="#bdbdbd"/><g transform="translate(0 316.7)"><circle cx="4.2" cy="-0.2" r="1.6" fill="none" stroke="#d2d2d2" stroke-width="0.8"/><rect x="4.6" y="0" width="2.2" height="2.2" fill="#d2d2d2"/><path d="M12.6 -1.4H14.6V0.8M13.8 0L14.6 0.9L15.4 0" fill="none" stroke="#d2d2d2" stroke-width="0.7"/></g><rect x="8.3" y="328.6" width="9.2" height="9.4" fill="#ffffff" stroke="#9a9a9a" stroke-width="0.6"/><rect x="2.6" y="323.2" width="9.3" height="9.4" fill="#1b1b1b" stroke="#bdbdbd" stroke-width="0.9"/><rect x="6" y="344.4" width="9" height="7" rx="1" fill="none" stroke="#d2d2d2" stroke-width="0.9"/><circle cx="10.5" cy="347.9" r="2" fill="none" stroke="#d2d2d2" stroke-width="0.8"/><rect x="5.6" y="361" width="6" height="4.4" fill="none" stroke="#d2d2d2" stroke-width="0.9"/><path d="M8 361V359H14.2V363.4H11.6" fill="none" stroke="#d2d2d2" stroke-width="0.9"/><path d="M15.8 366.4L16.8 365.4V366.4Z" fill="#bdbdbd"/></svg>
<div class="a" style="left:851px;top:241.7px;width:9px;height:301px;background:#4f4f4f;"></div>
<div class="a" style="left:707px;top:261.4px;width:144px;height:0.9px;background:#464646;"></div>
<svg style="left:710.5px;top:248.1px" width="10" height="6"><path d="M0.6 3Q4.8 -1.6 9.2 3Q4.8 7.6 0.6 3Z" fill="#e0e0e0"/><circle cx="4.9" cy="3" r="1.3" fill="#535353"/></svg>
<div class="a" style="left:725.8px;top:243.29999999999998px;width:16.2px;height:15.4px;background:#ffffff;background-image:conic-gradient(#cfdcf2 25%,#fff 0 50%,#cfdcf2 0 75%,#fff 0);background-size:4px 4px"></div>
<div class="t" style="left:747.00px;top:247.20px;font-size:7.5px;line-height:7.5px;color:#e2e2e2;font-weight:400;transform:scaleX(0.526);transform-origin:0 0;"><span style="font-size:1.22em">ハイライト</span>1</div>
<div class="a" style="left:707px;top:283.5px;width:144px;height:0.9px;background:#464646;"></div>
<svg style="left:710.5px;top:270.05px" width="10" height="6"><path d="M0.6 3Q4.8 -1.6 9.2 3Q4.8 7.6 0.6 3Z" fill="#e0e0e0"/><circle cx="4.9" cy="3" r="1.3" fill="#535353"/></svg>
<div class="a" style="left:725.8px;top:265.25px;width:16.2px;height:15.4px;background:#ffffff;background-image:conic-gradient(#cfdcf2 25%,#fff 0 50%,#cfdcf2 0 75%,#fff 0);background-size:4px 4px"></div>
<div class="t" style="left:747.00px;top:269.15px;font-size:7.5px;line-height:7.5px;color:#e2e2e2;font-weight:400;transform:scaleX(0.690);transform-origin:0 0;"><span style="font-size:1.22em">上側シャドー</span></div>
<div class="a" style="left:707px;top:305.4px;width:144px;height:0.9px;background:#464646;"></div>
<svg style="left:710.5px;top:292.05px" width="10" height="6"><path d="M0.6 3Q4.8 -1.6 9.2 3Q4.8 7.6 0.6 3Z" fill="#e0e0e0"/><circle cx="4.9" cy="3" r="1.3" fill="#535353"/></svg>
<div class="a" style="left:725.8px;top:287.25px;width:16.2px;height:15.4px;background:#ffffff;background-image:conic-gradient(#cfdcf2 25%,#fff 0 50%,#cfdcf2 0 75%,#fff 0);background-size:4px 4px"></div>
<div class="t" style="left:747.00px;top:291.15px;font-size:7.5px;line-height:7.5px;color:#e2e2e2;font-weight:400;transform:scaleX(0.786);transform-origin:0 0;"><span style="font-size:1.22em">瞳孔</span></div>
<div class="a" style="left:707px;top:327.3px;width:144px;height:0.9px;background:#464646;"></div>
<svg style="left:710.5px;top:313.95000000000005px" width="10" height="6"><path d="M0.6 3Q4.8 -1.6 9.2 3Q4.8 7.6 0.6 3Z" fill="#e0e0e0"/><circle cx="4.9" cy="3" r="1.3" fill="#535353"/></svg>
<div class="a" style="left:725.8px;top:309.15000000000003px;width:16.2px;height:15.4px;background:#ffffff;background-image:conic-gradient(#cfdcf2 25%,#fff 0 50%,#cfdcf2 0 75%,#fff 0);background-size:4px 4px"></div>
<div class="t" style="left:747.00px;top:313.05px;font-size:7.5px;line-height:7.5px;color:#e2e2e2;font-weight:400;transform:scaleX(0.786);transform-origin:0 0;"><span style="font-size:1.22em">外側線</span></div>
<div class="a" style="left:707px;top:327.6px;width:144px;height:21.899999999999977px;background:#676767;"></div>
<div class="a" style="left:707px;top:349.5px;width:144px;height:0.9px;background:#464646;"></div>
<svg style="left:710.5px;top:336.15000000000003px" width="10" height="6"><path d="M0.6 3Q4.8 -1.6 9.2 3Q4.8 7.6 0.6 3Z" fill="#e0e0e0"/><circle cx="4.9" cy="3" r="1.3" fill="#535353"/></svg>
<div class="a" style="left:725.8px;top:331.35px;width:16.2px;height:15.4px;background:#ffffff;background-image:conic-gradient(#cfdcf2 25%,#fff 0 50%,#cfdcf2 0 75%,#fff 0);background-size:4px 4px"></div>
<div class="t" style="left:747.00px;top:335.25px;font-size:7.5px;line-height:7.5px;color:#e2e2e2;font-weight:400;transform:scaleX(0.714);transform-origin:0 0;"><span style="font-size:1.22em">ベース色</span></div>
<svg style="left:725.8px;top:265px" width="16.2" height="15.4"><path d="M5.6 7.4Q8.4 3.6 11 7.2Q8.4 5.6 5.6 7.4Z" fill="#777"/></svg>
<div class="a" style="left:732.6px;top:293.4px;width:2.4px;height:3px;background:#000;border-radius:50%"></div>
<svg style="left:725.8px;top:308.5px" width="16.2" height="15.4"><ellipse cx="8.1" cy="7.7" rx="4.6" ry="5.6" fill="none" stroke="#777" stroke-width="0.6" stroke-dasharray="1 0.8"/></svg>
<svg style="left:723.4px;top:328.8px" width="21" height="20"><path d="M0.5 4V0.5H4M17 0.5H20.5V4M20.5 16V19.5H17M4 19.5H0.5V16" fill="none" stroke="#e0e0e0" stroke-width="1"/></svg>
<svg style="left:725.8px;top:331px" width="16.2" height="15.4"><defs><radialGradient id="thr" cx="0.45" cy="0.4" r="0.6"><stop offset="0" stop-color="#ff5a6a"/><stop offset="0.6" stop-color="#c01020"/><stop offset="1" stop-color="#700010"/></radialGradient></defs><ellipse cx="8.1" cy="7.8" rx="3.6" ry="4.3" fill="url(#thr)"/><circle cx="7" cy="6.4" r="0.8" fill="#fff" opacity="0.8"/></svg>
<div class="a" style="left:707px;top:528.8px;width:153px;height:0.8px;background:#4a4a4a;"></div>
<div class="a" style="left:707px;top:541px;width:153px;height:4.8px;background:#5a5a5a;"></div>
<svg style="left:748px;top:529px" width="100" height="11"><path d="M4.5 3.4H3Q1 3.4 1 5.3Q1 7.2 3 7.2H4.5M6.5 3.4H8Q10 3.4 10 5.3Q10 7.2 8 7.2H6.5M3.8 5.3H7.2" fill="none" stroke="#bcbcbc" stroke-width="0.9"/><text x="19" y="8.2" font-size="7.5" font-style="italic" fill="#bcbcbc" font-family="Liberation Serif">fx</text><rect x="31.5" y="2" width="7.6" height="6.4" fill="#bcbcbc"/><circle cx="35.3" cy="5.2" r="1.9" fill="#535353"/><circle cx="50" cy="5.4" r="3.3" fill="none" stroke="#bcbcbc" stroke-width="0.9"/><path d="M50 2.1A3.3 3.3 0 0 1 50 8.7Z" fill="#bcbcbc"/><path d="M60.6 2.4H63.4L64.2 3.3H68.2V8.4H60.6Z" fill="#bcbcbc"/><path d="M75.4 2.4H80.8V8.4H75.4Z" fill="none" stroke="#bcbcbc" stroke-width="0.9"/><path d="M75 5H77.8V2" fill="none" stroke="#bcbcbc" stroke-width="0.9"/><path d="M89.4 3.4H96M91.4 3.2V2.2H94V3.2M90.2 3.8L90.8 8.8H94.6L95.2 3.8" fill="none" stroke="#bcbcbc" stroke-width="0.9"/></svg>
<svg style="left:863.5px;top:559.5px" width="5" height="3"><path d="M0.3 0.3L2.5 2.5L4.7 0.3" stroke="#8a8a8a" fill="none" stroke-width="0.8"/></svg>
<div class="a" style="left:871px;top:40px;width:23.5px;height:13.5px;background:#444444;"></div>
<div class="a" style="left:894.5px;top:40px;width:32.8px;height:13.5px;background:#444444;"></div>
<div class="a" style="left:927.3px;top:40px;width:38.2px;height:13.5px;background:#535353;"></div>
<div class="a" style="left:965.5px;top:40px;width:36.5px;height:13.5px;background:#444444;"></div>
<div class="a" style="left:894.3px;top:40px;width:0.7px;height:13.5px;background:#3a3a3a;"></div>
<div class="a" style="left:965.5px;top:40px;width:0.7px;height:13.5px;background:#3a3a3a;"></div>
<div class="a" style="left:1002px;top:40px;width:0.7px;height:13.5px;background:#3a3a3a;"></div>
<div class="t" style="left:876.30px;top:42.90px;font-size:7.5px;line-height:7.5px;color:#a8a8a8;font-weight:400;transform:scaleX(0.667);transform-origin:0 0;"><span style="font-size:1.22em">カラー</span></div>
<div class="t" style="left:899.30px;top:42.90px;font-size:7.5px;line-height:7.5px;color:#a8a8a8;font-weight:400;transform:scaleX(0.654);transform-origin:0 0;"><span style="font-size:1.22em">スウォッチ</span></div>
<div class="t" style="left:931.60px;top:42.90px;font-size:7.5px;line-height:7.5px;color:#ececec;font-weight:400;transform:scaleX(0.679);transform-origin:0 0;"><span style="font-size:1.22em">ナビゲーター</span></div>
<div class="t" style="left:970.30px;top:42.90px;font-size:7.5px;line-height:7.5px;color:#a8a8a8;font-weight:400;transform:scaleX(0.676);transform-origin:0 0;"><span style="font-size:1.22em">ヒストグラム</span></div>
<div class="a" style="left:1016px;top:45.3px;width:5px;height:5px;background:#9a9a9a;"></div>
<div class="a" style="left:873.6px;top:100.7px;width:148.1px;height:146.9px;background:#ffffff;background-image:conic-gradient(#d2def4 25%,#fff 0 50%,#d2def4 0 75%,#fff 0);background-size:4.6px 4.6px"></div>
<svg style="left:0;top:0" width="1024" height="576"><clipPath id="navclip"><rect x="873.6" y="100.7" width="148.1" height="146.9"/></clipPath><g clip-path="url(#navclip)"><use href="#eye" transform="translate(948.5 178.2) scale(0.2716) translate(-433.15 -325.2)"/><rect x="840" y="107" width="179" height="134.9" fill="none" stroke="#d83c3c" stroke-width="1.4"/></g></svg>
<div class="a" style="left:871px;top:293.8px;width:153px;height:12.8px;background:#4d4d4d;"></div>
<div class="a" style="left:871.5px;top:293.8px;width:29.5px;height:12.8px;background:#454545;"></div>
<div class="t" style="left:873.00px;top:296.82px;font-size:6.5px;line-height:6.5px;color:#7a7a7a;font-weight:400;transform:scaleX(0.696);transform-origin:0 0;">146.41%</div>
<svg style="left:904px;top:296px" width="110" height="10"><path d="M1.2 6L3.6 3.8L6 6Z" fill="#dcdcdc"/><rect x="14.3" y="3" width="79" height="1.2" fill="#777"/><path d="M56.5 3.6L60 8.8H53Z" fill="#f0f0f0"/><path d="M98 6.2L101.6 2.8L105.4 6.2Z" fill="#dcdcdc"/></svg>
<div class="a" style="left:871px;top:308px;width:34px;height:15px;background:#444444;"></div>
<div class="a" style="left:905px;top:308px;width:22.7px;height:15px;background:#444444;"></div>
<div class="a" style="left:927.7px;top:308px;width:32px;height:15px;background:#535353;"></div>
<div class="a" style="left:959.7px;top:308px;width:64.3px;height:15px;background:#444444;"></div>
<div class="a" style="left:905px;top:308px;width:0.7px;height:15px;background:#3a3a3a;"></div>
<div class="t" style="left:876.20px;top:312.10px;font-size:7.5px;line-height:7.5px;color:#a8a8a8;font-weight:400;transform:scaleX(0.700);transform-origin:0 0;"><span style="font-size:1.22em">チャンネル</span></div>
<div class="t" style="left:911.30px;top:312.10px;font-size:7.5px;line-height:7.5px;color:#a8a8a8;font-weight:400;transform:scaleX(0.729);transform-origin:0 0;"><span style="font-size:1.22em">パス</span></div>
<div class="t" style="left:932.40px;top:312.10px;font-size:7.5px;line-height:7.5px;color:#ececec;font-weight:400;transform:scaleX(0.637);transform-origin:0 0;"><span style="font-size:1.22em">ヒストリー</span></div>
<div class="a" style="left:1015px;top:313.2px;width:5px;height:5px;background:#9a9a9a;"></div>
<div class="a" style="left:1014.4px;top:325px;width:7px;height:236px;background:#4c4c4c;"></div>
<div class="a" style="left:871.5px;top:346.8px;width:143px;height:0.8px;background:#474747;"></div>
<svg style="left:873px;top:331px" width="9" height="9"><path d="M7.8 0.8L4 4.6M3.4 4Q1.6 4.2 1.4 6.4Q1.2 8 0.4 8.4Q3.6 8.8 4.6 5.8" fill="none" stroke="#e0e0e0" stroke-width="1.1"/><path d="M0.8 2.6L2.4 1" stroke="#e0e0e0" stroke-width="0.8"/></svg>
<div class="a" style="left:884.75px;top:327.7px;width:16.5px;height:16px;background:#ffffff;background-image:conic-gradient(#d2def4 25%,#fff 0 50%,#d2def4 0 75%,#fff 0);background-size:4px 4px"></div>
<svg style="left:884.75px;top:327.7px" width="16.5" height="16"><ellipse cx="8.2" cy="8" rx="4.4" ry="5" fill="#3a1a6a"/><ellipse cx="8.2" cy="8.2" rx="3.4" ry="4" fill="#7a3ab8"/><ellipse cx="8.2" cy="8" rx="1.6" ry="2.2" fill="#1a0a30"/><circle cx="7" cy="6.6" r="1" fill="#fff"/></svg>
<div class="t" style="left:904.30px;top:331.70px;font-size:7.5px;line-height:7.5px;color:#dcdcdc;font-weight:400;transform:scaleX(0.755);transform-origin:0 0;"><span style="font-size:1.22em">アニメタイプ</span>1.psd</div>
<div class="a" style="left:871.5px;top:347.6px;width:143px;height:12.1px;background:#646464;"></div>
<div class="a" style="left:873.5px;top:349.8px;width:6.5px;height:7.6px;background:transparent;border:0.8px solid #555"></div>
<svg style="left:887.5px;top:349px" width="9" height="10"><path d="M0.8 1.2H5.4L8 3.4V9H0.8Z" fill="#cfcfcf"/><path d="M2 4.4H6.8M2 6H6.8M2 7.6H6.8" stroke="#7a7a7a" stroke-width="0.6"/></svg>
<div class="t" style="left:902.70px;top:349.90px;font-size:7.5px;line-height:7.5px;color:#e0e0e0;font-weight:400;transform:scaleX(0.614);transform-origin:0 0;"><span style="font-size:1.22em">開く</span></div>
<div class="a" style="left:871px;top:561.4px;width:153px;height:0.8px;background:#454545;"></div>
<svg style="left:968px;top:563.5px" width="44" height="10"><path d="M3 1.4H6.6L9 3.8V8.6H3Z" fill="#d8d8d8"/><path d="M0.4 6.2H3.8M2.1 4.5V7.9" stroke="#d8d8d8" stroke-width="1"/><path d="M19 3.2H20.6L21.4 2H24.6L25.4 3.2H27V8.4H19Z" fill="#d8d8d8"/><circle cx="23" cy="5.7" r="1.6" fill="#535353"/><path d="M34.2 2.4H40.2M36 2.2V1.2H38.4V2.2M34.8 3L35.3 8.8H39.1L39.6 3" fill="#d8d8d8"/><path d="M36.2 4V7.8M37.2 4V7.8M38.2 4V7.8" stroke="#8a8a8a" stroke-width="0.4"/></svg>
<div class="a" style="left:694.6px;top:53px;width:259.2px;height:188.7px;background:#535353;box-shadow:0 0 3px rgba(0,0,0,0.5)"></div>
<div class="a" style="left:694.6px;top:53px;width:259.2px;height:16px;background:#ffffff;"></div>
<div class="t" style="left:699.80px;top:57.30px;font-size:7.5px;line-height:7.5px;color:#1a1a1a;font-weight:400;transform:scaleX(0.794);transform-origin:0 0;"><span style="font-size:1.22em">色相・彩度</span></div>
<svg style="left:942px;top:56.5px" width="8" height="7"><path d="M1 0.5L7 6.5M7 0.5L1 6.5" stroke="#222" stroke-width="1"/></svg>
<div class="t" style="left:701.00px;top:76.30px;font-size:7.5px;line-height:7.5px;color:#cfcfcf;font-weight:400;transform:scaleX(0.738);transform-origin:0 0;"><span style="font-size:1.22em">プリセット</span> (E) :</div>
<div class="a" style="left:745.6px;top:75px;width:116.4px;height:8px;background:#434343;"></div>
<div class="t" style="left:749.80px;top:75.30px;font-size:7.5px;line-height:7.5px;color:#d8d8d8;font-weight:400;transform:scaleX(0.714);transform-origin:0 0;"><span style="font-size:1.22em">カスタム</span></div>
<svg style="left:855px;top:77px" width="6" height="4"><path d="M0.5 0.5L3 3L5.5 0.5" stroke="#aaa" fill="none" stroke-width="0.9"/></svg>
<svg style="left:869px;top:78px" width="10" height="7"><circle cx="3.5" cy="3" r="2.1" fill="none" stroke="#d8d8d8" stroke-width="1.6"/><circle cx="8.3" cy="5.3" r="0.6" fill="#bbb"/></svg>
<div class="a" style="left:888px;top:74.3px;width:60.7px;height:14.6px;background:transparent;border:1.4px solid #bdbdbd;border-radius:8px"></div>
<div class="t" style="left:912.80px;top:77.70px;font-size:7.5px;line-height:7.5px;color:#e6e6e6;font-weight:400;">OK</div>
<div class="a" style="left:888px;top:93.2px;width:60.7px;height:13.3px;background:transparent;border:1px solid #727272;border-radius:7px"></div>
<div class="t" style="left:906.30px;top:96.00px;font-size:7.5px;line-height:7.5px;color:#d6d6d6;font-weight:400;transform:scaleX(0.686);transform-origin:0 0;"><span style="font-size:1.22em">キャンセル</span></div>
<div class="a" style="left:701.6px;top:100.8px;width:176.8px;height:95.4px;background:transparent;border:1px solid #4a4a4a"></div>
<div class="a" style="left:712px;top:96.6px;width:69px;height:11.1px;background:#464646;"></div>
<div class="t" style="left:716.00px;top:98.60px;font-size:7.5px;line-height:7.5px;color:#dedede;font-weight:400;transform:scaleX(0.750);transform-origin:0 0;"><span style="font-size:1.22em">マスター</span></div>
<svg style="left:773px;top:101px" width="6" height="4"><path d="M0.5 0.5L3 3L5.5 0.5" stroke="#aaa" fill="none" stroke-width="0.9"/></svg>
<div class="t" style="left:740.20px;top:115.40px;font-size:7.5px;line-height:7.5px;color:#d0d0d0;font-weight:400;transform:scaleX(0.960);transform-origin:0 0;"><span style="font-size:1.22em">色相</span>(H) :</div>
<div class="a" style="left:818.75px;top:113.8px;width:20.3px;height:10.6px;background:#444444;"></div>
<div class="t" style="left:821.50px;top:115.40px;font-size:7.3px;line-height:7.3px;color:#e0e0e0;font-weight:400;">+82</div>
<div class="a" style="left:738px;top:130.2px;width:104.2px;height:3.6px;background:linear-gradient(90deg,#d83a30 0%,#f0b020 8%,#e8e020 13%,#30d030 33%,#20d0d0 49%,#1030e0 66%,#8020d0 76%,#d030c0 86%,#e02870 100%)"></div>
<div class="t" style="left:740.20px;top:143.10px;font-size:7.5px;line-height:7.5px;color:#d0d0d0;font-weight:400;"><span style="font-size:1.22em">彩度</span>(A) :</div>
<div class="a" style="left:818.75px;top:140.7px;width:20.3px;height:10.6px;background:#2a4a7a;border:1px solid #2a64b8"></div>
<div class="a" style="left:821px;top:142.6px;width:12.2px;height:7px;background:#1a6ed8;"></div>
<div class="t" style="left:821.30px;top:142.60px;font-size:7.3px;line-height:7.3px;color:#ffffff;font-weight:400;">+19</div>
<div class="a" style="left:833.3px;top:142.4px;width:0.8px;height:7.4px;background:#e8a040;"></div>
<div class="a" style="left:738px;top:158px;width:104.2px;height:2.5px;background:linear-gradient(90deg,#9a7c7c,#c85050 60%,#e02424)"></div>
<div class="t" style="left:740.20px;top:169.60px;font-size:7.5px;line-height:7.5px;color:#d0d0d0;font-weight:400;"><span style="font-size:1.22em">明度</span>(I) :</div>
<div class="a" style="left:818.75px;top:167.7px;width:20.3px;height:10.6px;background:#444444;"></div>
<div class="t" style="left:821.50px;top:169.40px;font-size:7.3px;line-height:7.3px;color:#e0e0e0;font-weight:400;">0</div>
<div class="a" style="left:738px;top:185.6px;width:104.2px;height:1.8px;background:linear-gradient(90deg,#000,#333 30%,#888 60%,#fff)"></div>
<svg style="left:817.9px;top:133px" width="7" height="5.5"><path d="M3.5 0.3L6.6 4.2Q6.8 5.2 5.8 5.2H1.2Q0.2 5.2 0.4 4.2Z" fill="#f4f4f4"/></svg>
<svg style="left:796.5px;top:160.2px" width="7" height="5.5"><path d="M3.5 0.3L6.6 4.2Q6.8 5.2 5.8 5.2H1.2Q0.2 5.2 0.4 4.2Z" fill="#f4f4f4"/></svg>
<svg style="left:786.3px;top:187.2px" width="7" height="5.5"><path d="M3.5 0.3L6.6 4.2Q6.8 5.2 5.8 5.2H1.2Q0.2 5.2 0.4 4.2Z" fill="#f4f4f4"/></svg>
<svg style="left:703px;top:203px" width="10" height="11"><path d="M3.5 9.8C2.2 8.6 1.4 7.4 1.6 6.3L2.4 6.1L3.4 7.3V2.6Q3.9 1.8 4.5 2.6V5.4L5 4.6Q5.6 4.2 6 4.8Q6.7 4.5 7.1 5.1Q7.8 4.9 8.1 5.6V8.2Q7.8 9.6 6.8 10.2Z" fill="#e8e8e8"/><path d="M1.5 1.6L2.4 2.4M4 0.4V1.2M6.3 1.6L5.7 2.3" stroke="#ddd" stroke-width="0.7"/></svg>
<svg style="left:841px;top:204px" width="10" height="9"><path d="M6.4 0.8Q7.6 -0.2 8.6 0.8Q9.4 1.8 8.4 2.8L7.6 3.4L8.1 4L7.4 4.6L4.8 2L5.4 1.4L6 1.9Z" fill="#c8c8c8"/><path d="M5.6 2.8L1.4 7.2L1 8.4L2.2 8L6.4 3.6" fill="none" stroke="#c8c8c8" stroke-width="0.9"/></svg>
<svg style="left:855px;top:204px" width="10" height="9"><path d="M6.4 0.8Q7.6 -0.2 8.6 0.8Q9.4 1.8 8.4 2.8L7.6 3.4L8.1 4L7.4 4.6L4.8 2L5.4 1.4L6 1.9Z" fill="#c8c8c8"/><path d="M5.6 2.8L1.4 7.2L1 8.4L2.2 8L6.4 3.6" fill="none" stroke="#c8c8c8" stroke-width="0.9"/><text x="6.8" y="9" font-size="5" fill="#c8c8c8" font-family="Liberation Sans">+</text></svg>
<svg style="left:869px;top:204px" width="10" height="9"><path d="M6.4 0.8Q7.6 -0.2 8.6 0.8Q9.4 1.8 8.4 2.8L7.6 3.4L8.1 4L7.4 4.6L4.8 2L5.4 1.4L6 1.9Z" fill="#c8c8c8"/><path d="M5.6 2.8L1.4 7.2L1 8.4L2.2 8L6.4 3.6" fill="none" stroke="#c8c8c8" stroke-width="0.9"/><text x="6.8" y="9" font-size="5" fill="#c8c8c8" font-family="Liberation Sans">-</text></svg>
<div class="a" style="left:888px;top:190.8px;width:6.7px;height:6.6px;background:#474747;border:1px solid #6a6a6a;border-radius:1px"></div>
<div class="t" style="left:898.60px;top:190.30px;font-size:7.5px;line-height:7.5px;color:#d0d0d0;font-weight:400;transform:scaleX(0.945);transform-origin:0 0;"><span style="font-size:1.22em">色彩の統一</span>(O)</div>
<div class="a" style="left:888px;top:205.1px;width:6.7px;height:6.6px;background:#e8e8e8;border-radius:1px"></div>
<svg style="left:888.5px;top:205.6px" width="6" height="6"><path d="M1 3L2.5 4.6L5 1.3" stroke="#333" stroke-width="1.2" fill="none"/></svg>
<div class="t" style="left:898.60px;top:205.00px;font-size:7.5px;line-height:7.5px;color:#d0d0d0;font-weight:400;transform:scaleX(0.759);transform-origin:0 0;"><span style="font-size:1.22em">プレビュー</span>(P)</div>
<div class="a" style="left:700.8px;top:222px;width:247.2px;height:4.1px;background:linear-gradient(90deg,#00ffff 0%,#0000ff 16.67%,#ff00ff 33.33%,#ff0000 50%,#ffff00 66.67%,#00ff00 83.33%,#00ffff 100%)"></div>
<div class="a" style="left:700.8px;top:231.1px;width:247.2px;height:4.3px;background:linear-gradient(90deg,#4400ff 0%,#ff00ff 10.3%,#ff0000 26.7%,#ffff00 43.2%,#00ff00 60%,#00ffff 76.5%,#0000ff 93.5%,#4400ff 100%)"></div>
</body></html>
